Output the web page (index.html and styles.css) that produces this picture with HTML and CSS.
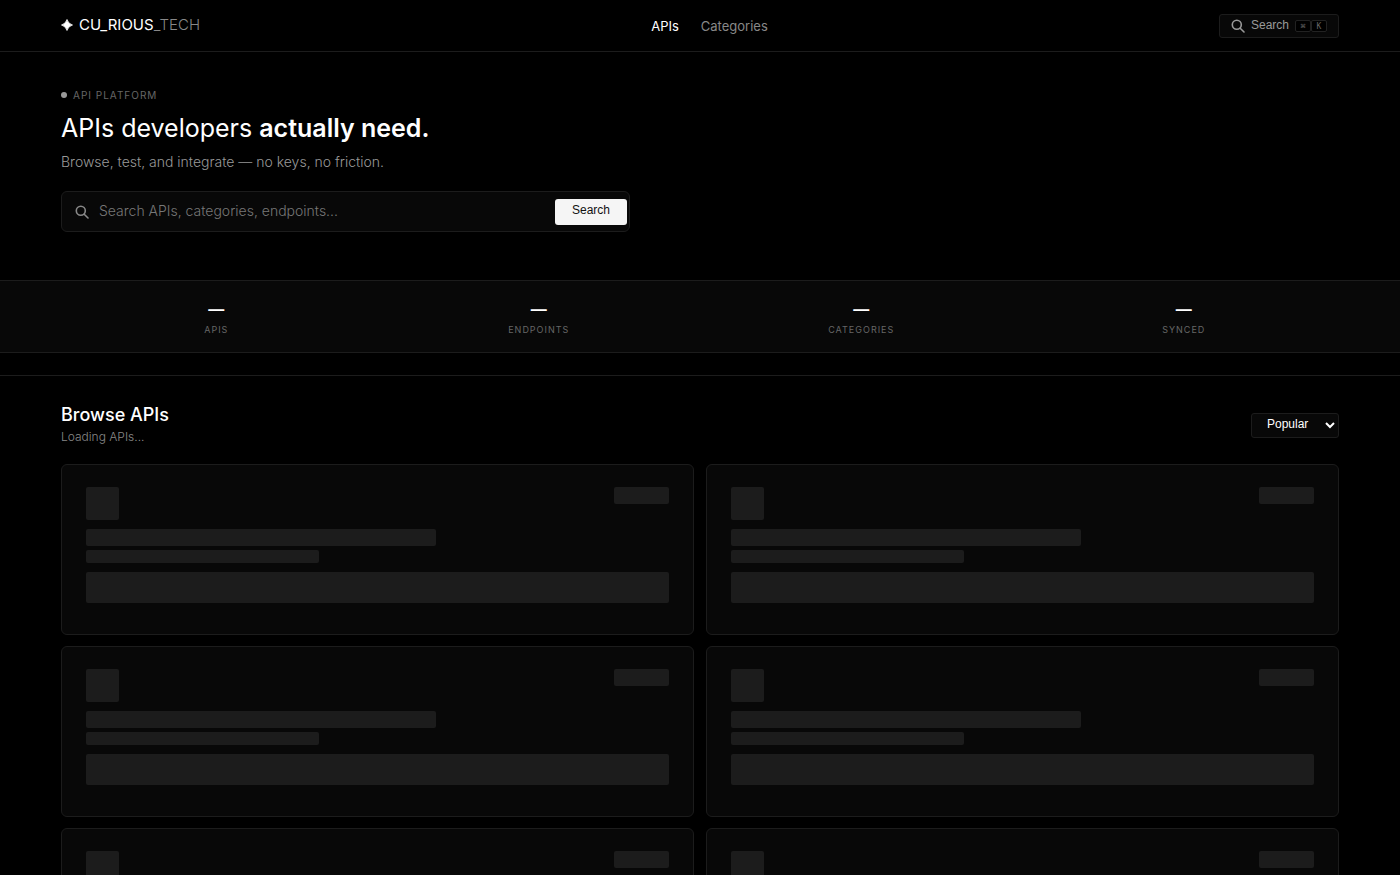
FILE: index.html
```
<!DOCTYPE html>
<html lang="en">
<head>
    <meta charset="UTF-8">
    <meta name="viewport" content="width=device-width, initial-scale=1.0">
    <title>CU_RIOUS_TECH - API Platform</title>
    <link rel="stylesheet" href="styles.css">
</head>
<body>

    <header class="header">
        <div class="container header-inner">
            <a href="#" class="logo">
                <svg class="logo-mark" viewBox="0 0 12 12" aria-hidden="true"><path d="M6 0.5Q7.2 4.8 11.5 6Q7.2 7.2 6 11.5Q4.8 7.2 0.5 6Q4.8 4.8 6 0.5Z" fill="currentColor" stroke="currentColor" stroke-width="0.8" stroke-linejoin="round"/></svg>
                <span>CU_RIOUS<span class="logo-light">_TECH</span></span>
            </a>
            <nav class="nav">
                <a href="#apis" class="active">APIs</a>
                <a href="#categories">Categories</a>
            </nav>
            <button type="button" class="search-trigger">
                <svg class="icon-search" viewBox="0 0 14 14" aria-hidden="true"><circle cx="5.8" cy="5.8" r="4.5"/><path d="M9.2 9.2l3.8 3.8"/></svg>
                <span>Search</span>
                <span class="keys"><kbd>⌘</kbd><kbd>K</kbd></span>
            </button>
        </div>
    </header>

    <main>
        <section class="hero">
            <div class="container">
                <div class="eyebrow"><span class="dot"></span>API PLATFORM</div>
                <h1>APIs developers <strong>actually need.</strong></h1>
                <p class="subtitle">Browse, test, and integrate — no keys, no friction.</p>
                <form class="search-box">
                    <svg class="icon-search" viewBox="0 0 14 14" aria-hidden="true"><circle cx="5.8" cy="5.8" r="4.5"/><path d="M9.2 9.2l3.8 3.8"/></svg>
                    <input type="text" name="q" placeholder="Search APIs, categories, endpoints..." aria-label="Search APIs">
                    <button type="submit">Search</button>
                </form>
            </div>
        </section>

        <section class="stats">
            <div class="container stats-grid">
                <div class="stat"><div class="stat-value">—</div><div class="stat-label">APIS</div></div>
                <div class="stat"><div class="stat-value">—</div><div class="stat-label">ENDPOINTS</div></div>
                <div class="stat"><div class="stat-value">—</div><div class="stat-label">CATEGORIES</div></div>
                <div class="stat"><div class="stat-value">—</div><div class="stat-label">SYNCED</div></div>
            </div>
        </section>

        <section class="browse" id="apis">
            <div class="container">
                <div class="browse-header">
                    <div>
                        <h2>Browse APIs</h2>
                        <p class="status">Loading APIs...</p>
                    </div>
                    <select class="sort" aria-label="Sort APIs">
                        <option>Popular</option>
                        <option>Newest</option>
                        <option>Name</option>
                    </select>
                </div>

                <div class="grid">
                    <div class="card">
                        <div class="card-top"><div class="sk sk-icon"></div><div class="sk sk-badge"></div></div>
                        <div class="sk sk-title"></div>
                        <div class="sk sk-sub"></div>
                        <div class="sk sk-text"></div>
                    </div>
                    <div class="card">
                        <div class="card-top"><div class="sk sk-icon"></div><div class="sk sk-badge"></div></div>
                        <div class="sk sk-title"></div>
                        <div class="sk sk-sub"></div>
                        <div class="sk sk-text"></div>
                    </div>
                    <div class="card">
                        <div class="card-top"><div class="sk sk-icon"></div><div class="sk sk-badge"></div></div>
                        <div class="sk sk-title"></div>
                        <div class="sk sk-sub"></div>
                        <div class="sk sk-text"></div>
                    </div>
                    <div class="card">
                        <div class="card-top"><div class="sk sk-icon"></div><div class="sk sk-badge"></div></div>
                        <div class="sk sk-title"></div>
                        <div class="sk sk-sub"></div>
                        <div class="sk sk-text"></div>
                    </div>
                    <div class="card">
                        <div class="card-top"><div class="sk sk-icon"></div><div class="sk sk-badge"></div></div>
                        <div class="sk sk-title"></div>
                        <div class="sk sk-sub"></div>
                        <div class="sk sk-text"></div>
                    </div>
                    <div class="card">
                        <div class="card-top"><div class="sk sk-icon"></div><div class="sk sk-badge"></div></div>
                        <div class="sk sk-title"></div>
                        <div class="sk sk-sub"></div>
                        <div class="sk sk-text"></div>
                    </div>
                </div>
            </div>
        </section>
    </main>

</body>
</html>
```
FILE: styles.css
```
* {
    box-sizing: border-box;
    margin: 0;
    padding: 0;
}

body {
    font-family: Inter, 'Liberation Sans', sans-serif;
    background: #000;
    color: #fff;
    font-size: 14px;
}

a {
    color: inherit;
    text-decoration: none;
}

.container {
    max-width: 1326px;
    margin: 0 auto;
    padding: 0 24px;
}

/* Header */
.header {
    border-bottom: 1px solid #1c1c1c;
}

.header-inner {
    display: flex;
    justify-content: space-between;
    align-items: center;
    height: 51px;
}

.logo {
    display: flex;
    align-items: center;
    gap: 6px;
    font-size: 15px;
    font-weight: 400;
    line-height: 20px;
    padding-bottom: 2px;
}

.logo-mark {
    width: 12px;
    height: 12px;
}

.logo-light {
    color: #888;
    font-weight: 300;
}

.nav {
    display: flex;
    gap: 22px;
    font-size: 13px;
    line-height: 20px;
    color: #888;
}

.nav .active {
    color: #fff;
}

.icon-search {
    width: 14px;
    height: 14px;
    flex-shrink: 0;
    fill: none;
    stroke: currentColor;
    stroke-width: 1.6;
    stroke-linecap: round;
}

.search-trigger {
    display: flex;
    align-items: center;
    gap: 6px;
    height: 24px;
    padding: 0 11px;
    background: #080808;
    border: 1px solid #1c1c1c;
    border-radius: 3px;
    color: #999;
    font-family: 'Liberation Sans', Arial, sans-serif;
    font-size: 12px;
    line-height: 14px;
}

.search-trigger > span {
    padding-bottom: 2px;
}

.search-trigger .keys {
    display: flex;
    padding: 0;
}

kbd {
    width: 16px;
    height: 12px;
    border: 1px solid #222;
    border-radius: 2px;
    background: #000;
    color: #666;
    font-family: 'DejaVu Sans Mono', monospace;
    font-size: 8px;
    line-height: 11px;
    text-align: center;
}

/* Hero */
.hero {
    padding: 35px 0 48px;
}

.eyebrow {
    display: flex;
    align-items: center;
    gap: 6px;
    color: #666;
    font-size: 10px;
    line-height: 16px;
    letter-spacing: 1px;
}

.dot {
    width: 6px;
    height: 6px;
    border-radius: 50%;
    background: #999;
}

h1 {
    margin-top: 9px;
    font-size: 25px;
    font-weight: 400;
    line-height: 32px;
}

h1 strong {
    font-weight: 600;
}

.subtitle {
    margin-top: 7px;
    color: #999;
    font-size: 14px;
    font-weight: 300;
    line-height: 22px;
}

.search-box {
    display: flex;
    align-items: center;
    max-width: 569px;
    height: 41px;
    margin-top: 18px;
    padding: 0 2px 0 13px;
    background: #080808;
    border: 1px solid #1c1c1c;
    border-radius: 6px;
    color: #888;
}

.search-box input {
    flex: 1;
    min-width: 0;
    padding: 0 10px 2px;
    background: none;
    border: none;
    outline: none;
    color: #fff;
    font-family: inherit;
    font-size: 14px;
    font-weight: 300;
}

.search-box input::placeholder {
    color: #777;
}

.search-box button {
    height: 26px;
    padding: 0 17px 3px;
    background: #f5f5f5;
    border: none;
    border-radius: 3px;
    color: #111;
    font-family: 'Liberation Sans', Arial, sans-serif;
    font-size: 12px;
}

/* Stats */
.stats {
    background: #080808;
    border-top: 1px solid #1c1c1c;
    border-bottom: 1px solid #1c1c1c;
    padding: 16px 0 14px;
}

.stats-grid {
    display: grid;
    grid-template-columns: repeat(4, 1fr);
    gap: 12px;
}

.stat {
    text-align: center;
}

.stat-value {
    font-size: 16px;
    font-weight: 600;
    line-height: 25px;
}

.stat-label {
    color: #666;
    font-size: 9px;
    line-height: 16px;
    letter-spacing: 1px;
}

/* Browse */
.browse {
    margin-top: 22px;
    padding: 28px 0;
    border-top: 1px solid #1c1c1c;
}

.browse-header {
    display: flex;
    justify-content: space-between;
    align-items: center;
    margin-bottom: 18px;
}

h2 {
    font-size: 18px;
    font-weight: 500;
    line-height: 22px;
}

.status {
    margin-top: 2px;
    color: #888;
    font-size: 12px;
    font-weight: 300;
    line-height: 18px;
}

.sort {
    width: 88px;
    height: 25px;
    padding: 0 0 2px 11px;
    background: #080808;
    border: 1px solid #1c1c1c;
    border-radius: 3px;
    color: #fff;
    font-family: 'Liberation Sans', Arial, sans-serif;
    font-size: 12px;
}

.grid {
    display: grid;
    grid-template-columns: repeat(2, 1fr);
    gap: 11px 12px;
}

.card {
    padding: 22px 24px 31px;
    background: #080808;
    border: 1px solid #1c1c1c;
    border-radius: 6px;
}

.card-top {
    display: flex;
    justify-content: space-between;
    align-items: flex-start;
    margin-bottom: 9px;
}

/* Skeleton blocks */
.sk {
    background: #1c1c1c;
    border-radius: 2px;
}

.sk-icon {
    width: 33px;
    height: 33px;
}

.sk-badge {
    width: 55px;
    height: 17px;
}

.sk-title {
    width: 60%;
    height: 17px;
    margin-bottom: 4px;
}

.sk-sub {
    width: 40%;
    height: 13px;
    margin-bottom: 9px;
}

.sk-text {
    height: 31px;
}
```
